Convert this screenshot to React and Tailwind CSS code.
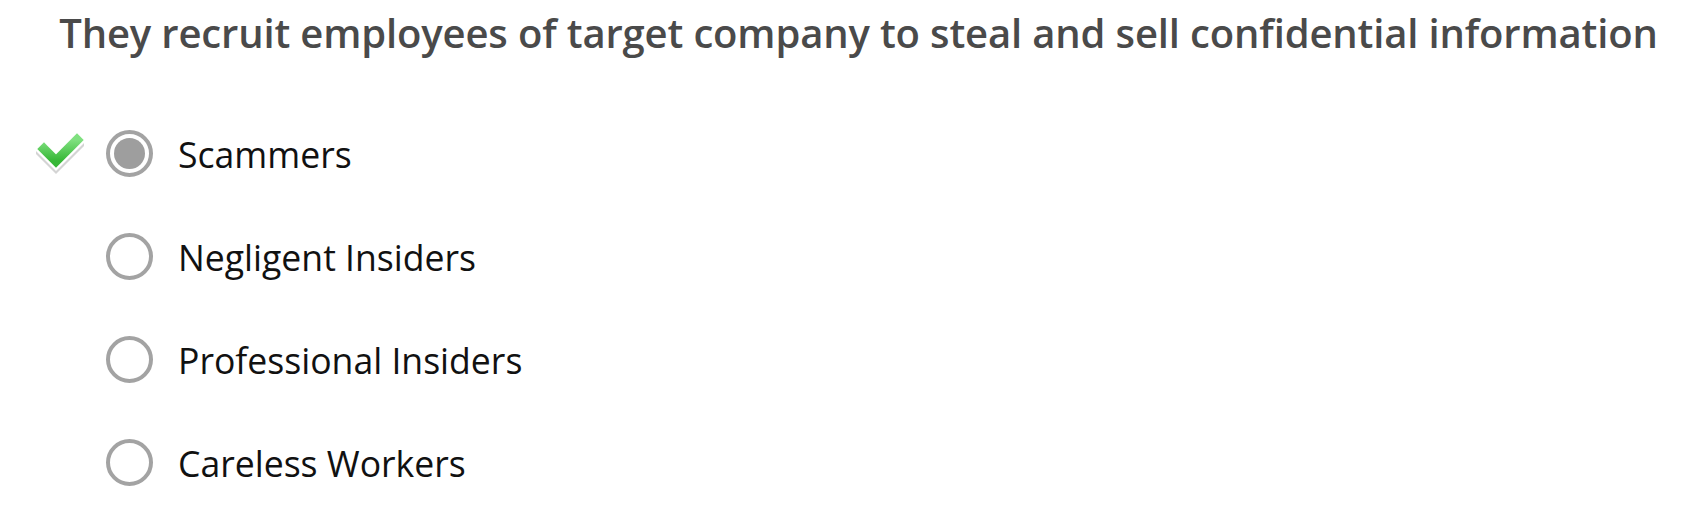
import React from 'react';

const options = [
    { label: 'Scammers', selected: true, correct: true },
    { label: 'Negligent Insiders' },
    { label: 'Professional Insiders' },
    { label: 'Careless Workers' },
];

function CheckMark() {
    return (
        <svg width="48" height="44" viewBox="0 0 48 44" fill="none">
            <defs>
                <linearGradient id="chk" x1="0" y1="0" x2="0" y2="1">
                    <stop offset="0%" stopColor="#7fe07f" />
                    <stop offset="100%" stopColor="#36b736" />
                </linearGradient>
            </defs>
            <polyline points="8,17 20,29 41,8" transform="translate(0 3)" stroke="#d4d4d4" strokeWidth="14" strokeLinejoin="miter" strokeLinecap="square" />
            <polyline points="8,17 20,29 41,8" stroke="#ffffff" strokeWidth="14" strokeLinejoin="miter" strokeLinecap="square" />
            <polyline points="8,17 20,29 41,8" stroke="url(#chk)" strokeWidth="9.5" strokeLinejoin="miter" strokeLinecap="square" />
        </svg>
    );
}

function Radio({ selected }) {
    return (
        <div className="w-[47px] h-[47px] rounded-full border-[4px] border-[#a3a3a3] flex items-center justify-center shrink-0">
            {selected && <div className="w-[31px] h-[31px] rounded-full bg-[#9e9e9e]" />}
        </div>
    );
}

export default function App() {
    return (
        <div className="w-[1700px] h-[512px] bg-white overflow-hidden" style={{ fontFamily: '"Open Sans", sans-serif' }}>
            {/* question */}
            <h1 className="pt-[9px] pl-[17px] text-center text-[40px] leading-[48px] tracking-[-0.15px] font-semibold text-[#4a4a4a]">
                They recruit employees of target company to steal and sell confidential information
            </h1>

            {/* answers */}
            <div className="mt-[45px]">
                {options.map((opt) => (
                    <div key={opt.label} className="h-[103px] flex items-center pl-[36px]">
                        <div className="w-[48px] flex items-center justify-center">
                            {opt.correct && <CheckMark />}
                        </div>
                        <div className="ml-[22px]">
                            <Radio selected={opt.selected} />
                        </div>
                        <span className="ml-[25px] text-[35.6px] leading-[48px] text-[#111111]">{opt.label}</span>
                    </div>
                ))}
            </div>
        </div>
    );
}
